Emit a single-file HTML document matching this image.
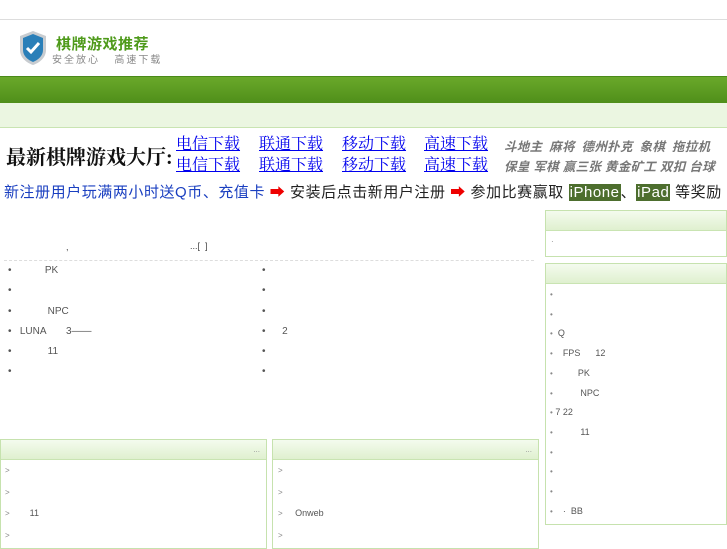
<!DOCTYPE html>
<html><head><meta charset="utf-8"><style>
*{margin:0;padding:0;box-sizing:border-box}
body{width:727px;height:545px;overflow:hidden;background:#fff;font-family:"Liberation Sans","Noto Sans CJK SC",sans-serif;position:relative;font-size:10px;color:#444}
.a{position:absolute}
.hdr{background:linear-gradient(#f4fbee,#dff0cf);border-bottom:1px solid #c9e4b2}
.box{border:1px solid #c6e2ae}
.dl{font-size:16px;color:#0000ee;text-decoration:underline;font-family:"Liberation Serif","Noto Serif CJK SC",serif;line-height:20px}
.g{font-size:12.5px;color:#777;font-style:italic;font-weight:bold;letter-spacing:0.3px}
.li{position:absolute;font-size:10px;color:#555}
.b{color:#888;font-size:8px}
</style></head><body>
<div class="a" style="left:0;top:19px;width:727px;height:1px;background:#ddd"></div>
<svg class="a" style="left:18px;top:30px" width="30" height="36" viewBox="0 0 30 36"><path d="M15 1 L28 6 V20 C28 28 21 33 15 35 C9 33 2 28 2 20 V6 Z" fill="#c8ccd0"/><path d="M15 4 L25 8 V20 C25 26 20 30 15 32 C10 30 5 26 5 20 V8 Z" fill="#2a7fb8"/><path d="M9 18 L13 22 L21 13" stroke="#fff" stroke-width="3" fill="none"/></svg>
<div class="a" style="left:56px;top:33px;font-size:15px;font-weight:bold;color:#4e9a1a;letter-spacing:0.5px">棋牌游戏推荐</div>
<div class="a" style="left:52px;top:51px;font-size:10px;color:#888;letter-spacing:2px">安全放心&nbsp;&nbsp;&nbsp;高速下载</div>
<div class="a" style="left:0;top:76px;width:727px;height:27px;background:linear-gradient(#6aa82a,#4f8f1a);border-top:1px solid #4a8a18"></div>
<div class="a" style="left:0;top:103px;width:727px;height:25px;background:#ebf6e1;border-bottom:1px solid #c9e4b2"></div>
<div class="a" style="left:6px;top:141px;font-size:20px;font-weight:bold;color:#111;font-family:'Liberation Serif','Noto Serif CJK SC',serif">最新棋牌游戏大厅:</div>
<div class="a dl" style="left:176px;top:135px">电信下载</div><div class="a dl" style="left:259px;top:135px">联通下载</div><div class="a dl" style="left:342px;top:135px">移动下载</div><div class="a dl" style="left:424px;top:135px">高速下载</div>
<div class="a dl" style="left:176px;top:156px">电信下载</div><div class="a dl" style="left:259px;top:156px">联通下载</div><div class="a dl" style="left:342px;top:156px">移动下载</div><div class="a dl" style="left:424px;top:156px">高速下载</div>
<div class="a g" style="left:504px;top:136px;word-spacing:3px">斗地主 麻将 德州扑克 象棋 拖拉机</div>
<div class="a g" style="left:504px;top:156px">保皇 军棋 赢三张 黄金矿工 双扣 台球</div>
<div class="a" style="left:4px;top:181px;font-size:15px;color:#1a3fc0;white-space:nowrap;letter-spacing:0.55px">新注册用户玩满两小时送Q币、充值卡 <span style="color:#e00">➡</span> <span style="color:#222">安装后点击新用户注册 <span style="color:#e00">➡</span> 参加比赛赢取 <span style="background:#4d6e2e;color:#fff;padding:0 1px">iPhone</span>、<span style="background:#4d6e2e;color:#fff;padding:0 1px">iPad</span> 等奖励</span></div>
<div class="a box" style="left:545px;top:210px;width:182px;height:47px"><div class="hdr" style="height:20px"></div><div class="b" style="padding:6px 5px">·</div></div>
<div class="a" style="left:66px;top:242px;font-size:9px">,</div><div class="a" style="left:190px;top:241px;font-size:9px">...[&nbsp;&nbsp;]</div>
<div class="a" style="left:4px;top:260px;width:530px;border-top:1px dashed #ddd"></div>
<div class="li" style="left:8px;top:265px">•&nbsp;&nbsp;&nbsp;&nbsp;&nbsp;&nbsp;&nbsp;&nbsp;&nbsp;&nbsp;&nbsp;&nbsp;PK</div>
<div class="li" style="left:8px;top:285px">•</div>
<div class="li" style="left:8px;top:306px">•&nbsp;&nbsp;&nbsp;&nbsp;&nbsp;&nbsp;&nbsp;&nbsp;&nbsp;&nbsp;&nbsp;&nbsp;&nbsp;NPC</div>
<div class="li" style="left:8px;top:326px">•&nbsp;&nbsp;&nbsp;LUNA&nbsp;&nbsp;&nbsp;&nbsp;&nbsp;&nbsp;&nbsp;3——</div>
<div class="li" style="left:8px;top:346px">•&nbsp;&nbsp;&nbsp;&nbsp;&nbsp;&nbsp;&nbsp;&nbsp;&nbsp;&nbsp;&nbsp;&nbsp;&nbsp;11</div>
<div class="li" style="left:8px;top:366px">•</div>
<div class="li" style="left:262px;top:265px">•</div><div class="li" style="left:262px;top:285px">•</div><div class="li" style="left:262px;top:306px">•</div>
<div class="li" style="left:262px;top:326px">•&nbsp;&nbsp;&nbsp;&nbsp;&nbsp;&nbsp;2</div><div class="li" style="left:262px;top:346px">•</div><div class="li" style="left:262px;top:366px">•</div>
<div class="a box" style="left:545px;top:263px;width:182px;height:262px"><div class="hdr" style="height:20px"></div></div>
<div class="li" style="left:550px;top:285px;line-height:19.7px;font-size:9px"><span class="b">•</span><br><span class="b">•</span><br><span class="b">•</span>&nbsp; Q<br><span class="b">•</span>&nbsp;&nbsp;&nbsp;&nbsp;FPS&nbsp;&nbsp;&nbsp;&nbsp;&nbsp;&nbsp;12<br><span class="b">•</span>&nbsp;&nbsp;&nbsp;&nbsp;&nbsp;&nbsp;&nbsp;&nbsp;&nbsp;&nbsp;PK<br><span class="b">•</span>&nbsp;&nbsp;&nbsp;&nbsp;&nbsp;&nbsp;&nbsp;&nbsp;&nbsp;&nbsp;&nbsp;NPC<br><span class="b">•</span>&nbsp;7 22<br><span class="b">•</span>&nbsp;&nbsp;&nbsp;&nbsp;&nbsp;&nbsp;&nbsp;&nbsp;&nbsp;&nbsp;&nbsp;11<br><span class="b">•</span><br><span class="b">•</span><br><span class="b">•</span><br><span class="b">•</span>&nbsp;&nbsp;&nbsp;&nbsp;·&nbsp;&nbsp;BB</div>
<div class="a box" style="left:0;top:439px;width:267px;height:110px"><div class="hdr" style="height:20px;text-align:right;padding-right:6px;color:#999;font-size:8px;line-height:20px">...</div></div>
<div class="a box" style="left:272px;top:439px;width:267px;height:110px"><div class="hdr" style="height:20px;text-align:right;padding-right:6px;color:#999;font-size:8px;line-height:20px">...</div></div>
<div class="li" style="left:5px;top:460px;line-height:20.5px;font-size:9px"><span class="b">&gt;</span><br><span class="b">&gt;</span><br><span class="b">&gt;</span>&nbsp;&nbsp;&nbsp;&nbsp;&nbsp;&nbsp;&nbsp;&nbsp;11<br><span class="b">&gt;</span></div>
<div class="li" style="left:278px;top:460px;line-height:20.5px;font-size:9px"><span class="b">&gt;</span><br><span class="b">&gt;</span><br><span class="b">&gt;</span>&nbsp;&nbsp;&nbsp;&nbsp;&nbsp;Onweb<br><span class="b">&gt;</span></div>
</body></html>
